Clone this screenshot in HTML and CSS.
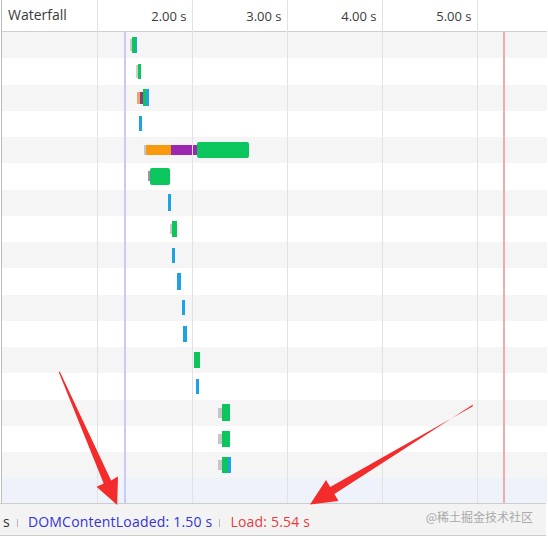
FILE: index.html
```html
<!DOCTYPE html>
<html>
<head>
<meta charset="utf-8">
<link rel="stylesheet" href="styles.css">
</head>
<body>
<div class="page">
  <div class="chart">
    <div class="header">
      <div class="hcell title">Waterfall</div>
      <div class="hcell tick">2.00 s</div>
      <div class="hcell tick">3.00 s</div>
      <div class="hcell tick">4.00 s</div>
      <div class="hcell tick">5.00 s</div>
    </div>
    <div class="rows">
      <div class="row"><div class="bars" style="margin-left:128px"><i class="seg gray" style="width:2px"></i><i class="seg green tall" style="width:3.5px"></i><i class="seg blue tall" style="width:1.5px"></i></div></div>
      <div class="row"><div class="bars" style="margin-left:134px"><i class="seg ghost" style="width:2px"></i><i class="seg green mid" style="width:3px"></i></div></div>
      <div class="row"><div class="bars" style="margin-left:135px"><i class="seg tan" style="width:3px"></i><i class="seg plum" style="width:3px"></i><i class="seg green tall" style="width:2.5px"></i><i class="seg blue tall" style="width:3px"></i></div></div>
      <div class="row"><div class="bars" style="margin-left:137px"><i class="seg blue mid" style="width:2.5px"></i></div></div>
      <div class="row"><div class="bars" style="margin-left:142px"><i class="seg gray thin" style="width:1.5px"></i><i class="seg orange thin" style="width:25px"></i><i class="seg purple thin" style="width:26px"></i><i class="seg green tall big" style="width:52px"></i></div></div>
      <div class="row"><div class="bars" style="margin-left:145.5px"><i class="seg plumgray thin" style="width:2.5px"></i><i class="seg green tall big" style="width:19.5px"></i></div></div>
      <div class="row"><div class="bars" style="margin-left:165.5px"><i class="seg blue tall" style="width:3.5px"></i></div></div>
      <div class="row"><div class="bars" style="margin-left:168px"><i class="seg gray thin" style="width:1.5px"></i><i class="seg green tall" style="width:5px"></i></div></div>
      <div class="row"><div class="bars" style="margin-left:170px"><i class="seg blue mid" style="width:2.7px"></i></div></div>
      <div class="row"><div class="bars" style="margin-left:175.3px"><i class="seg blue tall" style="width:3.7px"></i></div></div>
      <div class="row"><div class="bars" style="margin-left:180px"><i class="seg blue mid" style="width:2.7px"></i></div></div>
      <div class="row"><div class="bars" style="margin-left:181.3px"><i class="seg blue tall" style="width:4px"></i></div></div>
      <div class="row"><div class="bars" style="margin-left:192.3px"><i class="seg green tall" style="width:5.7px"></i></div></div>
      <div class="row"><div class="bars" style="margin-left:193.7px"><i class="seg blue mid" style="width:3px"></i></div></div>
      <div class="row"><div class="bars" style="margin-left:215.7px"><i class="seg gray thin" style="width:4.3px"></i><i class="seg green tall" style="width:8px"></i></div></div>
      <div class="row"><div class="bars" style="margin-left:216px"><i class="seg gray thin" style="width:4px"></i><i class="seg green tall" style="width:8px"></i></div></div>
      <div class="row"><div class="bars" style="margin-left:216px"><i class="seg gray thin" style="width:4px"></i><i class="seg green tall" style="width:6px"></i><i class="seg blue tall" style="width:3px"></i></div></div>
    </div>
    <div class="filler"></div>
    <div class="lines">
      <span class="gridline" style="left:94.5px"></span>
      <span class="gridline" style="left:189.5px"></span>
      <span class="gridline" style="left:284.5px"></span>
      <span class="gridline" style="left:379.5px"></span>
      <span class="gridline" style="left:474.5px"></span>
      <span class="marker dcl" style="left:121.5px"></span>
      <span class="marker load" style="left:500.5px"></span>
    </div>
  </div>
  <div class="footer">
    <span class="ftxt">s</span>
    <span class="sep"></span>
    <span class="ftxt dcltxt">DOMContentLoaded: 1.50 s</span>
    <span class="sep"></span>
    <span class="ftxt loadtxt">Load: 5.54 s</span>
    <span class="watermark">@稀土掘金技术社区</span>
  </div>
  <svg class="arrows" viewBox="0 0 548 541" width="548" height="541">
    <polygon points="58.5,371.5 60,372 111.1,480.4 118,476.5 117.2,505 96.5,486.8 103.7,483.6" fill="#f42b2b"/>
    <polygon points="473,404.5 472.5,406.5 330.2,487.1 326,480 310,504.5 338.5,501 334.4,493.9" fill="#f42b2b"/>
  </svg>
</div>
</body>
</html>
```

FILE: styles.css
```css
html, body {
  margin: 0;
  padding: 0;
  background: #ffffff;
}
.page {
  position: relative;
  width: 548px;
  height: 541px;
  overflow: hidden;
  font-family: "Open Sans", "Noto Sans", sans-serif;
}
.chart {
  position: relative;
  margin-left: 1px;
  width: 545px;
  border-left: 1px solid #bdbdbd;
}
.header {
  display: flex;
  height: 31px;
  border-bottom: 1px solid #cfcfcf;
  background: #ffffff;
}
.hcell {
  box-sizing: border-box;
  flex: 0 0 95px;
  font-size: 13px;
  color: #3a3a3a;
  line-height: 31px;
}
.title {
  flex-basis: 94.5px;
  padding-left: 6px;
  font-size: 14px;
  line-height: 30px;
}
.tick {
  text-align: right;
  padding-right: 5px;
  padding-top: 1px;
}
.rows {
  display: flex;
  flex-direction: column;
}
.row {
  height: 26.25px;
  display: flex;
  align-items: center;
  background: #ffffff;
}
.row:nth-child(odd) {
  background: #f5f5f5;
}
.bars {
  display: flex;
  align-items: center;
}
.seg {
  display: block;
  height: 12px;
}
.seg.tall { height: 16.5px; }
.seg.mid { height: 15px; }
.seg.thin { height: 10px; }
.seg.big { border-radius: 2px; }
.green { background: #0bc65c; }
.blue { background: #1ea2e6; }
.orange { background: #f8990e; }
.purple { background: #9c27b0; }
.tan { background: #e9a86a; }
.plum { background: #8f3a78; }
.plumgray { background: #a98aa8; }
.gray { background: #c6c6c6; }
.ghost {
  box-sizing: border-box;
  height: 13px;
  border: 1px solid #cfcfcf;
  background: #ffffff;
}
.filler {
  height: 25px;
  background: #eef3fb;
}
.lines {
  position: absolute;
  left: 0;
  top: 0;
  right: 0;
  bottom: 0;
  pointer-events: none;
}
.gridline {
  position: absolute;
  top: 0;
  bottom: 0;
  width: 1px;
  background: #e2e2e2;
}
.marker {
  position: absolute;
  top: 32px;
  bottom: 0;
  width: 2px;
}
.dcl { background: #cbc9f6; }
.load { background: #f4a9ab; }
.footer {
  display: flex;
  align-items: center;
  width: 546px;
  height: 33px;
  box-sizing: border-box;
  border-top: 1px solid #cdcdcd;
  border-bottom: 1px solid #cdcdcd;
  background: #f3f3f3;
  padding-left: 3px;
  padding-top: 4px;
}
.ftxt {
  font-size: 14px;
  letter-spacing: 0.2px;
  color: #333333;
  white-space: nowrap;
}
.dcltxt { color: #3434d6; }
.loadtxt { color: #e63c40; }
.sep {
  width: 1px;
  height: 8px;
  margin: 2px 10px 0 7px;
  background: #b8b8b8;
}
.watermark {
  margin-left: auto;
  margin-right: 13px;
  margin-top: -10px;
  font-family: "Noto Sans CJK SC", sans-serif;
  font-size: 12px;
  color: #a9a9a9;
  white-space: nowrap;
}
.arrows {
  position: absolute;
  left: 0;
  top: 0;
  pointer-events: none;
}
```
